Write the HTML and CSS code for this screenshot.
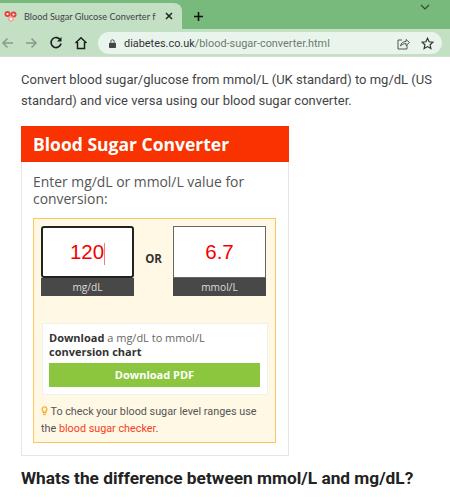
FILE: index.html
```html
<!DOCTYPE html>
<html lang="en">
<head>
	<meta charset="UTF-8">
	<title>Blood Sugar Converter</title>
	<link rel="stylesheet" href="styles.css">
</head>
<body>
<div class="tabbar">
  <div class="tab">
    <svg class="favicon" width="13" height="12" viewBox="0 0 13 12">
      <circle cx="3.500" cy="4" r="3" fill="#e8423f"/>
      <circle cx="9.500" cy="4.500" r="3" fill="#e8423f"/>
      <circle cx="7" cy="9" r="2.800" fill="#f4a09c"/>
      <circle cx="3.500" cy="4" r="1.100" fill="#fff"/>
      <circle cx="9.500" cy="4.500" r="1.100" fill="#fff"/>
      <circle cx="7" cy="9" r="1.300" fill="#fff"/>
    </svg>
    <span class="tab-title">Blood Sugar Glucose Converter f</span>
    <svg class="tab-close" width="8" height="8" viewBox="0 0 8 8"><path d="M1 1l6 6M7 1L1 7" stroke="#222" stroke-width="1.500"/></svg>
  </div>
  <svg class="new-tab" width="11" height="11" viewBox="0 0 11 11"><path d="M5.500 1v9M1 5.500h9" stroke="#111" stroke-width="1.600"/></svg>
  <svg class="tab-menu" width="10" height="6" viewBox="0 0 10 6"><path d="M1 1l4 4 4-4" fill="none" stroke="#2b4a30" stroke-width="1.100"/></svg>
</div>
<div class="toolbar">
  <svg class="nav" width="14" height="14" viewBox="0 0 14 14"><path d="M13 7H3M7.500 2.500L3 7l4.500 4.500" fill="none" stroke="#8a9a8c" stroke-width="1.500"/></svg>
  <svg class="nav" width="14" height="14" viewBox="0 0 14 14"><path d="M1 7h10M6.500 2.500L11 7l-4.500 4.500" fill="none" stroke="#8a9a8c" stroke-width="1.500"/></svg>
  <svg class="nav" width="14" height="14" viewBox="0 0 14 14"><path d="M11.500 4.200A5 5 0 1 0 12 7.500" fill="none" stroke="#1f1f1f" stroke-width="1.600"/><path d="M12.500 1v4.500H8z" fill="#1f1f1f"/></svg>
  <svg class="nav" width="14" height="14" viewBox="0 0 14 14"><path d="M1.500 7L7 1.800 12.500 7M3.500 6v6.500h7V6" fill="none" stroke="#1f1f1f" stroke-width="1.500"/></svg>
  <div class="omnibox">
    <svg class="lock" width="7" height="9" viewBox="0 0 8 10"><path d="M2 4V2.800a2 2 0 0 1 4 0V4" fill="none" stroke="#444" stroke-width="1.100"/><rect y="4" width="8" height="6" rx="1" fill="#444"/></svg>
    <span class="url"><span class="domain">diabetes.co.uk</span>/blood-sugar-converter.html</span>
    <svg class="share" width="13" height="13" viewBox="0 0 13 13"><path d="M5 3H1v9h9V8" fill="none" stroke="#555" stroke-width="1"/><path d="M3.500 9c.5-3 2.500-4.500 5.500-4.500V2.500l3.500 3-3.500 3V6.500C7 6.500 5 7.300 3.500 9z" fill="none" stroke="#555" stroke-width="1"/></svg>
    <svg class="star" width="13" height="13" viewBox="0 0 13 13"><path d="M6.500 1.300l1.600 3.500 3.800.4-2.800 2.600.8 3.800-3.400-2-3.400 2 .8-3.800L1.100 5.200l3.800-.4z" fill="none" stroke="#333" stroke-width="1.200"/></svg>
  </div>
</div>

<div class="page">
  <p class="intro">Convert blood sugar/glucose from mmol/L (UK standard) to mg/dL (US standard) and vice versa using our blood sugar converter.</p>

  <div class="converter">
    <div class="conv-head">Blood Sugar Converter</div>
    <div class="conv-body">
      <div class="conv-label">Enter mg/dL or mmol/L value for conversion:</div>
      <div class="panel">
        <div class="inputs">
          <div class="field">
            <div class="value focused">120<span class="caret"></span></div>
            <div class="unit">mg/dL</div>
          </div>
          <div class="or">OR</div>
          <div class="field">
            <div class="value">6.7</div>
            <div class="unit">mmol/L</div>
          </div>
        </div>
        <div class="download">
          <div class="download-text"><b>Download</b> a mg/dL to mmol/L<br><b>conversion chart</b></div>
          <div class="pdf-btn">Download PDF</div>
        </div>
        <p class="tip">
          <svg class="bulb" width="7" height="10" viewBox="0 0 7 11"><path d="M3.500.8a2.700 2.700 0 0 1 1.500 4.900V7H2V5.700A2.700 2.700 0 0 1 3.500.8z" fill="#fff6dc" stroke="#f5a623" stroke-width="1.300"/><path d="M2 8.500h3V10H2z" fill="#f5a623"/></svg>
          To check your blood sugar level ranges use the <a class="tip-link" href="#">blood sugar checker</a>.
        </p>
      </div>
    </div>
  </div>

  <h2 class="question">Whats the difference between mmol/L and mg/dL?</h2>
</div>
</body>
</html>
```

FILE: styles.css
```css
* {
  margin: 0;
  padding: 0;
  box-sizing: border-box;
}

html, body {
  height: 500px;
  overflow: hidden;
}

body {
  background-color: #fff;
  font-family: "Roboto", "Liberation Sans", sans-serif;
}

.tabbar {
  height: 29px;
  background-color: #78ba7c;
  display: flex;
  align-items: flex-end;
  position: relative;
}

.tab {
  width: 182px;
  height: 26px;
  background-color: #c3dfc4;
  border-radius: 0 8px 0 0;
  display: flex;
  align-items: center;
  padding-left: 4px;
}

.favicon {
  flex: none;
}

.tab-title {
  margin-left: 7px;
  width: 134px;
  font-family: "Lato", sans-serif;
  font-size: 9.200px;
  color: #444;
  white-space: nowrap;
}

.tab-close {
  margin-left: 7px;
}

.new-tab {
  margin: 0 0 7px 11px;
}

.tab-menu {
  position: absolute;
  top: 4px;
  right: 20px;
}

.toolbar {
  height: 28px;
  padding-top: 1px;
  background-color: #c3dfc4;
  display: flex;
  align-items: center;
  border-bottom: 1px solid #d8dcd8;
}

.nav {
  flex: none;
}

.toolbar .nav:nth-child(2) { margin-left: 11px; }
.toolbar .nav:nth-child(3) { margin-left: 10px; }
.toolbar .nav:nth-child(4) { margin-left: 11px; }

.omnibox {
  margin-left: 10px;
  width: 344px;
  height: 22px;
  background-color: #e9f5ec;
  border-radius: 11px;
  display: flex;
  align-items: center;
  padding-left: 11px;
}

.lock {
  flex: none;
}

.url {
  margin-left: 8px;
  width: 262px;
  font-size: 10.900px;
  color: #6f7a71;
  white-space: nowrap;
}

.domain {
  color: #333;
}

.share {
  margin-left: 11px;
}

.star {
  margin-left: 11px;
}

.page {
  padding: 12px 0 0 21px;
}

.intro {
  width: 415px;
  font-size: 13px;
  line-height: 21px;
  color: #444;
}

.converter {
  width: 268px;
  margin-top: 15px;
  border: 1px solid #e6e6e6;
  border-top: 0;
}

.conv-head {
  height: 36px;
  margin: 0 -1px;
  background-color: #f83200;
  color: #fff;
  font-family: "Open Sans", sans-serif;
  font-weight: 700;
  font-size: 17.500px;
  line-height: 37px;
  padding-left: 12px;
}

.conv-body {
  padding: 11px 12px 12px 11px;
}

.conv-label {
  font-family: "Open Sans", sans-serif;
  font-size: 13.900px;
  line-height: 17px;
  color: #555;
}

.panel {
  margin-top: 11px;
  background-color: #fff8e5;
  border: 1px solid #fcc560;
  padding: 7px 7px 5px;
}

.inputs {
  display: flex;
  align-items: flex-start;
}

.field {
  width: 93px;
}

.value {
  height: 52px;
  background-color: #fff;
  border: 1px solid #666;
  font-family: "Liberation Sans", sans-serif;
  font-size: 20.500px;
  line-height: 50px;
  color: #f40000;
  text-align: center;
}

.value.focused {
  border: 2px solid #222;
  border-radius: 3px;
  line-height: 48px;
}

.caret {
  display: inline-block;
  width: 1px;
  height: 22px;
  background-color: #f08078;
  vertical-align: middle;
}

.unit {
  height: 18px;
  background-color: #484848;
  color: #ddd;
  font-family: "Open Sans", sans-serif;
  font-size: 10.200px;
  line-height: 18px;
  text-align: center;
}

.or {
  width: 39px;
  margin-top: 25px;
  text-align: center;
  font-family: "Open Sans", sans-serif;
  font-weight: 700;
  font-size: 11.500px;
  line-height: 16px;
  color: #333;
}

.download {
  margin: 27px 0 0 1px;
  background-color: #fff;
  border: 1px solid #edf3ec;
  padding: 7px 7px 7px 6px;
  font-family: "Open Sans", sans-serif;
  font-size: 11px;
  line-height: 14px;
  color: #666;
}

.download b {
  color: #333;
}

.pdf-btn {
  margin-top: 4px;
  height: 24px;
  background-color: #8cc63f;
  color: #fff;
  font-weight: 700;
  font-size: 11px;
  line-height: 23px;
  text-align: center;
}

.tip {
  margin-top: 8px;
  font-size: 10.800px;
  line-height: 17px;
  color: #555;
}

.bulb {
  vertical-align: -1px;
}

.tip-link {
  color: #f4411f;
  text-decoration: none;
}

.question {
  margin-top: 11px;
  font-size: 17.300px;
  line-height: 22px;
  font-weight: 700;
  color: #222;
  white-space: nowrap;
}
```
